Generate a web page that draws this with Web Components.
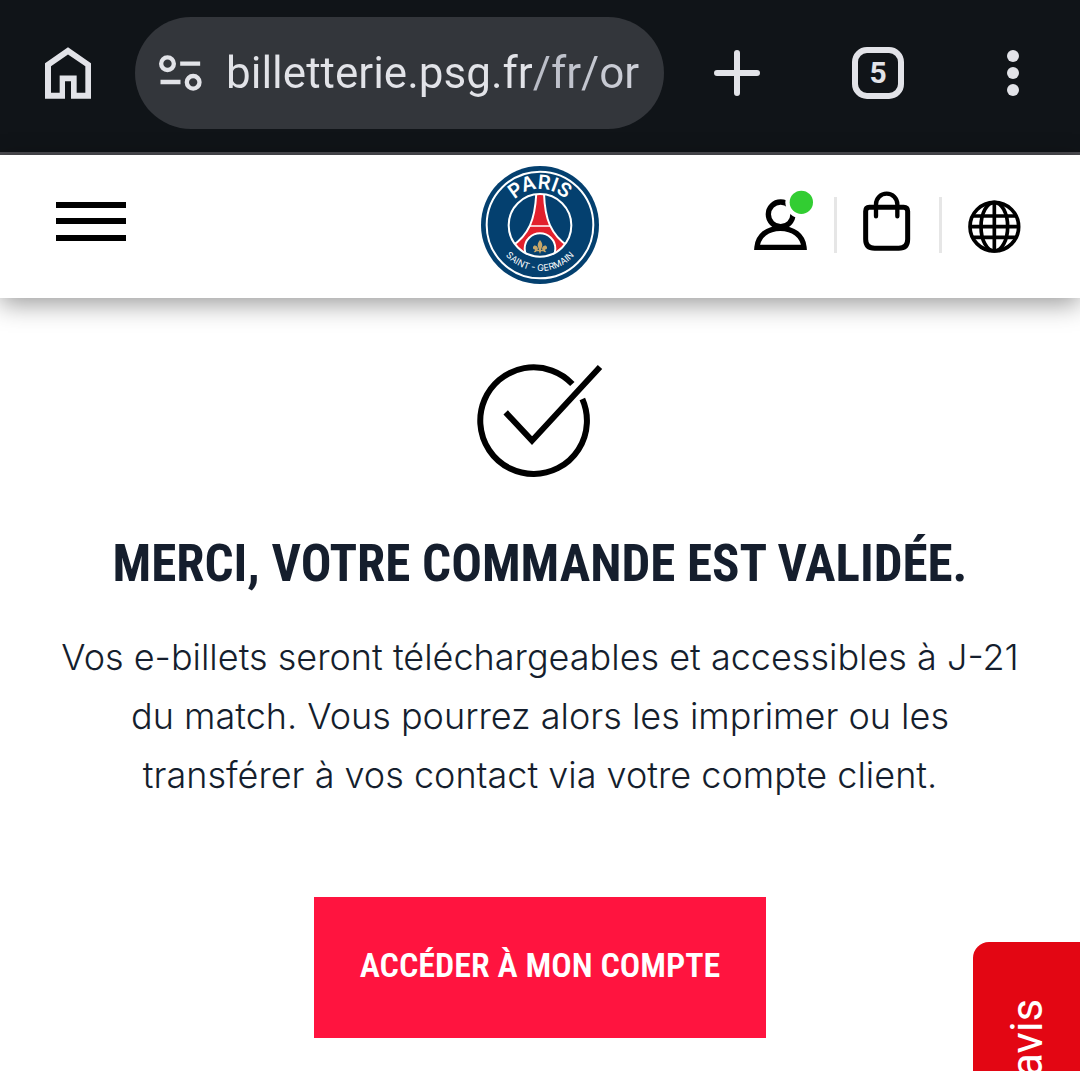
<!DOCTYPE html>
<html lang="fr">
<head>
<meta charset="utf-8">
<meta name="viewport" content="width=device-width, initial-scale=1">
<title>Billetterie Paris Saint-Germain</title>
<style>
  body {
    margin: 0;
    background: #fff;
    color: #151e2d;
    font-family: Inter, "Liberation Sans", sans-serif;
  }
</style>
</head>
<body>

<browser-bar host="billetterie.psg.fr" path="/fr/or" tabs="5"></browser-bar>

<site-header>
  <club-logo></club-logo>
</site-header>

<order-confirmation>
  <span slot="title">Merci, votre commande est validée.</span>
  Vos e-billets seront téléchargeables et accessibles à J-21 du match. Vous pourrez alors les imprimer ou les transférer à vos contact via votre compte client.
  <action-button slot="action" href="#compte">Accéder à mon compte</action-button>
</order-confirmation>

<feedback-tab>avis</feedback-tab>

<script>
// small helper, every component fills its shadow root from a template
function render(element, html) {
  const template = document.createElement('template')
  template.innerHTML = html
  element.attachShadow({ mode: 'open' }).appendChild(template.content.cloneNode(true))
}


// browser toolbar
class BrowserBar extends HTMLElement {
  constructor() {
    super()
    render(this, `
<style>
  :host {
    display: grid;
    grid-template-columns: 135px 1fr 146px 136px 134px;
    padding: 17px 0 23px;
    background: #101418;
    border-bottom: 3px solid #4b4b50;
    color: #e2e3e8;
    font-family: Roboto, sans-serif;
  }
  button {
    display: flex;
    align-items: center;
    justify-content: center;
    padding: 0;
    border: 0;
    background: none;
    color: inherit;
    font: inherit;
  }
  .address {
    display: flex;
    align-items: center;
    gap: 24px;
    height: 112px;
    padding: 0 16px 0 24px;
    box-sizing: border-box;
    border-radius: 56px;
    background: #33363b;
    min-width: 0;
  }
  .address button { flex: none; }
  input {
    flex: 1;
    min-width: 0;
    height: 64px;
    padding: 0;
    border: 0;
    outline: 0;
    color: #e2e3e8;
    font: 400 44px Roboto, sans-serif;
    background: linear-gradient(to right, #e2e3e8 307px, #b9bcc6 307px, #d0d2da);
    -webkit-background-clip: text;
    background-clip: text;
    -webkit-text-fill-color: transparent;
  }
  .count {
    width: 52px;
    height: 52px;
    box-sizing: border-box;
    border: 6px solid #e2e3e8;
    border-radius: 15px;
    font-size: 30px;
    font-weight: 700;
    line-height: 40px;
    text-align: center;
  }
</style>
<button aria-label="Accueil">
  <svg width="46" height="52" viewBox="0 0 138 155" fill="currentColor" fill-rule="evenodd">
    <path d="M0 48 69 0l69 48v107H78v-53H60v53H0zM18 57v80h26V85h51v52h26V57L69 22z"/>
  </svg>
</button>
<div class="address">
  <button aria-label="Informations sur le site">
    <svg width="43" height="36" viewBox="0 0 128 108" fill="none" stroke="currentColor" stroke-width="13">
      <circle cx="25" cy="26" r="19"/>
      <path d="M63 26h60M4 81h60"/>
      <circle cx="102" cy="82" r="19"/>
    </svg>
  </button>
  <input type="text" aria-label="Adresse">
</div>
<button aria-label="Nouvel onglet">
  <svg width="46" height="46" viewBox="0 0 46 46" stroke="currentColor" stroke-width="6" stroke-linecap="round">
    <path d="M23 3v40M3 23h40"/>
  </svg>
</button>
<button aria-label="Onglets"><span class="count"></span></button>
<button aria-label="Menu">
  <svg width="12" height="46" viewBox="0 0 12 46" fill="currentColor">
    <circle cx="6" cy="6" r="6"/><circle cx="6" cy="23" r="6"/><circle cx="6" cy="40" r="6"/>
  </svg>
</button>`)
  }

  connectedCallback() {
    this.shadowRoot.querySelector('input').value = this.getAttribute('host') + this.getAttribute('path')
    this.shadowRoot.querySelector('.count').textContent = this.getAttribute('tabs')
  }
}
customElements.define('browser-bar', BrowserBar)


// round club crest, the names follow the circle
class ClubLogo extends HTMLElement {
  constructor() {
    super()
    render(this, `
<style>
  :host { display: block; }
  a, svg { display: block; }
  text {
    fill: #fff;
    font-family: Inter, sans-serif;
    text-anchor: middle;
  }
  .top { font-size: 59px; font-weight: 600; }
  .bottom { font-size: 27px; font-weight: 400; }
</style>
<a href="#accueil" aria-label="Paris Saint-Germain">
  <svg width="118" height="118" viewBox="0 0 354 354">
    <defs>
      <path id="upper" d="M69 177a108 108 0 0 1 216 0"/>
      <path id="lower" d="M39 177a138 138 0 0 0 276 0"/>
      <clipPath id="disc"><circle cx="177" cy="178" r="93"/></clipPath>
    </defs>
    <circle cx="177" cy="177" r="177" fill="#04406f"/>
    <circle cx="177" cy="177" r="160" fill="none" stroke="#fff" stroke-width="6"/>
    <g clip-path="url(#disc)">
      <path d="M166 80h23c1 42 7 74 18 98 13 28 29 46 54 62l-34 46H127l-34-46c25-16 41-34 54-62 11-24 17-56 19-98z" fill="#e2202c" stroke="#fff" stroke-width="6"/>
      <path d="M146 180h63" stroke="#fff" stroke-width="4"/>
      <circle cx="177" cy="248" r="46" fill="#04406f" stroke="#fff" stroke-width="6"/>
    </g>
    <circle cx="177" cy="178" r="94" fill="none" stroke="#fff" stroke-width="6"/>
    <g fill="#c5a66a">
      <path d="M177 222c-7 9-9 15-5 23l3 11h4l3-11c4-8 2-14-5-23z"/>
      <path d="M171 248c-2-10-13-13-15-4-1 5 3 8 6 6 0 6-3 7-5 8 8 2 12-3 14-10zM183 248c2-10 13-13 15-4 1 5-3 8-6 6 0 6 3 7 5 8-8 2-12-3-14-10z"/>
      <path d="M168 252h18v4h-18zM174 256h6l-3 8z"/>
    </g>
    <text class="top"><textPath href="#upper" startOffset="50%">PARIS</textPath></text>
    <text class="bottom"><textPath href="#lower" startOffset="50%">SAINT - GERMAIN</textPath></text>
  </svg>
</a>`)
  }
}
customElements.define('club-logo', ClubLogo)


// site header, the logo goes in the slot
class SiteHeader extends HTMLElement {
  constructor() {
    super()
    render(this, `
<style>
  :host { display: block; }
  header {
    display: grid;
    grid-template-columns: 1fr auto 1fr;
    align-items: center;
    padding: 11px 56px 14px;
    background: #fff;
    box-shadow: 0 6px 24px rgba(0, 0, 0, .4);
  }
  button, a {
    display: block;
    padding: 0;
    border: 0;
    background: none;
    color: #000;
  }
  svg { display: block; overflow: visible; }
  nav {
    display: flex;
    align-items: center;
    justify-content: flex-end;
    gap: 26px;
    padding-right: 3px;
  }
  .line { width: 3px; height: 56px; background: #e6e6e6; }
</style>
<header>
  <div>
    <button aria-label="Menu">
      <svg width="70" height="70" viewBox="0 0 70 70" stroke="currentColor" stroke-width="6">
        <path d="M0 15h70M0 31h70M0 48h70"/>
      </svg>
    </button>
  </div>
  <slot></slot>
  <nav>
    <a href="#profil" aria-label="Mon compte, connecté">
      <svg width="54" height="70" viewBox="0 0 162 210" fill="none" stroke="currentColor" stroke-width="16">
        <circle cx="80" cy="73" r="37"/>
        <path d="M9 172c3-35 32-57 70-57s68 22 71 57z" fill="#fff"/>
        <circle cx="142" cy="37" r="48" fill="#fff" stroke="none"/>
        <circle cx="142" cy="37" r="35" fill="#32cd32" stroke="none"/>
      </svg>
    </a>
    <span class="line"></span>
    <a href="#panier" aria-label="Panier">
      <svg width="50" height="70" viewBox="0 0 150 210" fill="none" stroke="currentColor" stroke-width="15">
        <path d="M19 52h103q12 0 12 12v84q0 27-27 27H35q-27 0-27-27V64q0-12 11-12z"/>
        <path d="M39 79V43a32 32 0 0 1 64 0v36" stroke-width="13" stroke-linecap="round"/>
      </svg>
    </a>
    <span class="line"></span>
    <button aria-label="Langue">
      <svg width="53" height="70" viewBox="0 0 159 210" fill="none" stroke="currentColor" stroke-width="11">
        <circle cx="79" cy="110" r="73"/>
        <ellipse cx="79" cy="110" rx="40" ry="73"/>
        <path d="M79 37v146M6 110h146M14 78h130M14 142h130"/>
      </svg>
    </button>
  </nav>
</header>`)
  }
}
customElements.define('site-header', SiteHeader)


// confirmation message with its tick, title, text and action
class OrderConfirmation extends HTMLElement {
  constructor() {
    super()
    render(this, `
<style>
  :host { display: block; }
  main {
    display: flex;
    flex-direction: column;
    align-items: center;
    padding: 67px 48px 0;
    text-align: center;
  }
  svg { overflow: visible; }
  h1 {
    margin: 50px 0 0;
    font: 700 51px/72px "Roboto Condensed", "Liberation Sans Narrow", sans-serif;
    text-transform: uppercase;
  }
  p {
    margin: 28px 0 92px;
    font-size: 36px;
    font-weight: 300;
    line-height: 59px;
  }
</style>
<main>
  <svg width="125" height="113" viewBox="0 0 375 339" fill="none" stroke="#000" stroke-width="18">
    <path d="M313 102A160 160 0 1 1 283 57"/>
    <path d="M83 142l79 85L366 6"/>
  </svg>
  <h1><slot name="title"></slot></h1>
  <p><slot></slot></p>
  <slot name="action"></slot>
</main>`)
  }
}
customElements.define('order-confirmation', OrderConfirmation)


// red call to action
class ActionButton extends HTMLElement {
  constructor() {
    super()
    render(this, `
<style>
  :host { display: block; }
  a {
    display: block;
    padding: 44px 46px 49px;
    background: #ff143f;
    color: #fff;
    font: 600 34px/48px "Roboto Condensed", "Liberation Sans Narrow", sans-serif;
    text-decoration: none;
    text-transform: uppercase;
  }
</style>
<a><slot></slot></a>`)
  }

  connectedCallback() {
    this.shadowRoot.querySelector('a').href = this.getAttribute('href')
  }
}
customElements.define('action-button', ActionButton)


// feedback tab on the edge of the window, it runs below the fold
class FeedbackTab extends HTMLElement {
  constructor() {
    super()
    render(this, `
<style>
  :host {
    position: fixed;
    top: 942px;
    right: 0;
  }
  button {
    display: block;
    width: 107px;
    height: 240px;
    padding: 0 0 57px;
    border: 0;
    border-radius: 0 0 16px 0;
    background: #e30613;
    color: #fff;
    font: 400 44px/50px Roboto, sans-serif;
    text-align: end;
    writing-mode: vertical-rl;
    transform: rotate(180deg);
  }
</style>
<button><slot></slot></button>`)
  }
}
customElements.define('feedback-tab', FeedbackTab)
</script>
</body>
</html>
